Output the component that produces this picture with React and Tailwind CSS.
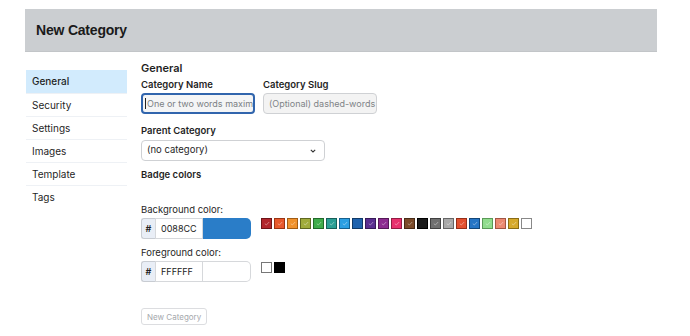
import React from 'react'

const swatches = [
  ['#b1262c', '#6e1418'],
  ['#e8582b', '#9a3414'],
  ['#f0922d', '#a15c14'],
  ['#a0ab3b', '#5f6820'],
  ['#3fab4a', '#21692a'],
  ['#2a9e95', '#165f59'],
  ['#2c9fe2', '#17608d'],
  ['#1f63ae', '#113a67'],
  ['#5a2e90', '#361a58'],
  ['#8c2b90', '#551858'],
  ['#e8316d', '#931c43'],
  ['#7b4b2a', '#482b17'],
  ['#1a1a1a', '#000000'],
  ['#6f6f6f', '#404040'],
  ['#a9a9a9', '#666666'],
  ['#e3502f', '#952f18'],
  ['#2575c5', '#134677'],
  ['#90dc8d', '#5a9a57'],
  ['#ec8971', '#a25544'],
  ['#d6a92b', '#8a6c15'],
  ['#ffffff', '#888888'],
]

const menu = ['General', 'Security', 'Settings', 'Images', 'Template', 'Tags']

function Swatch({ bg, border, check = true }) {
  return (
    <div
      className="w-[11px] h-[11px] border flex items-center justify-center"
      style={{ backgroundColor: bg, borderColor: border }}
    >
      {check && (
        <svg width="6" height="5" viewBox="0 0 6 5" className="opacity-40">
          <path d="M0.8 2.6 L2.3 4 L5.2 1" stroke="#fff" strokeWidth="1" fill="none" />
        </svg>
      )}
    </div>
  )
}

function ColorGroup({ value, color, bordered }) {
  return (
    <div className="flex h-[21px]">
      <div className="w-[14px] flex items-center justify-center bg-[#e9eef6] border border-[#c8ccd2] border-r-0 rounded-l-[3px] text-[9px] font-semibold text-[#222]">
        #
      </div>
      <div className="w-[48px] flex items-center pl-[5px] border border-[#d6d8db] bg-white text-[9px] text-[#222]">
        {value}
      </div>
      <div
        className={`w-[48px] rounded-r-[5px] ${bordered ? 'border border-[#d6d8db] border-l-0' : ''}`}
        style={{ backgroundColor: color }}
      />
    </div>
  )
}

export default function App() {
  return (
    <div className="w-[690px] h-[336px] bg-white overflow-hidden font-['Inter',sans-serif] text-[#1f1f1f]">
      <div className="mt-[9px] ml-[25px] w-[632px] h-[43px] bg-[#cbced1] border-b border-[#c2c5c8] flex items-center pl-[11px]">
        <h1 className="font-['Liberation_Sans',sans-serif] font-bold text-[14px] text-[#1a1a1a] tracking-[-0.2px]">
          New Category
        </h1>
      </div>

      <div className="flex ml-[26px] mt-[10px] gap-[14px]">
        <ul className="w-[101px] mt-[8px]">
          {menu.map((m, i) => (
            <li
              key={m}
              className={`h-[23px] flex items-center pl-[6px] text-[10px] ${
                i === 0 ? 'bg-[#d2ebfd] font-medium' : 'border-t border-[#eef1f5]'
              }`}
            >
              {m}
            </li>
          ))}
        </ul>

        <div className="flex-1">
          <h2 className="text-[11px] font-semibold leading-[12px]">General</h2>
          <div className="flex gap-[8px] mt-[5px]">
            <div>
              <label className="block text-[9.5px] font-semibold leading-[12px] mb-[2px]">Category Name</label>
              <div className="w-[114px] h-[21px] rounded-[4px] border-2 border-[#3165ad] bg-[#f4f5f6] flex items-center pl-[2px] text-[9px] text-[#7b7f84] whitespace-nowrap overflow-hidden">
                <span className="w-px h-[11px] bg-[#222] mr-px shrink-0" />
                One or two words maxim
              </div>
            </div>
            <div>
              <label className="block text-[9.5px] font-semibold leading-[12px] mb-[2px]">Category Slug</label>
              <div className="w-[114px] h-[21px] rounded-[4px] border border-[#cfd1d4] bg-[#f3f3f3] flex items-center pl-[5px] text-[9px] text-[#808387] whitespace-nowrap overflow-hidden">
                (Optional) dashed-words
              </div>
            </div>
          </div>

          <label className="block text-[9.5px] font-semibold leading-[12px] mt-[11px] mb-[3px]">Parent Category</label>
          <div className="w-[184px] h-[21px] rounded-[4px] border border-[#cfd1d4] bg-white flex items-center justify-between pl-[5px] pr-[8px] text-[9.5px]">
            <span>(no category)</span>
            <svg width="6" height="4" viewBox="0 0 6 4">
              <path d="M0.8 0.8 L3 3 L5.2 0.8" stroke="#333" strokeWidth="1.1" fill="none" />
            </svg>
          </div>

          <h3 className="text-[9.5px] font-semibold leading-[12px] mt-[8px]">Badge colors</h3>

          <div className="mt-[23px] text-[9.5px] leading-[12px]">Background color:</div>
          <div className="flex items-start gap-[10px] mt-[2px]">
            <ColorGroup value="0088CC" color="#2a7dc8" />
            <div className="flex gap-[2px]">
              {swatches.map(([bg, b], i) => (
                <Swatch key={i} bg={bg} border={b} check={i !== 7 && i !== 12 && i !== 20} />
              ))}
            </div>
          </div>

          <div className="mt-[8px] text-[9.5px] leading-[12px]">Foreground color:</div>
          <div className="flex items-start gap-[10px] mt-[2px]">
            <ColorGroup value="FFFFFF" color="#ffffff" bordered />
            <div className="flex gap-[2px] pt-[1px]">
              <Swatch bg="#ffffff" border="#777" check={false} />
              <Swatch bg="#000000" border="#000" check={false} />
            </div>
          </div>

          <button
            type="button"
            disabled
            className="mt-[26px] h-[17px] px-[5px] rounded-[3px] border border-[#dcdde0] bg-white text-[8px] text-[#a5a8ac]"
          >
            New Category
          </button>
        </div>
      </div>
    </div>
  )
}
